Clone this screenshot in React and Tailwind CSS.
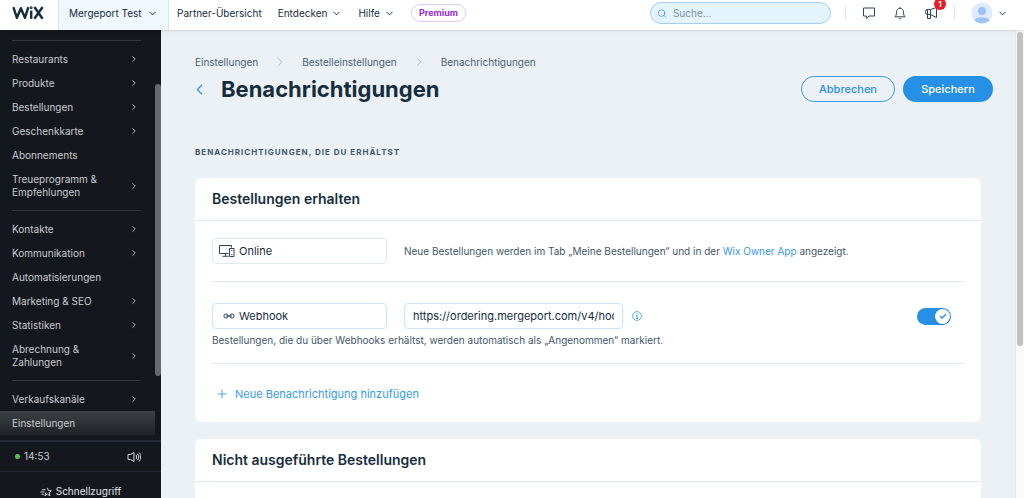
import React, { useState } from "react";
import { ChevronDown, ChevronLeft, ChevronRight, Plus, Search } from "lucide-react";

const menuGroups = [
  [
    { title: "Restaurants", sub: true },
    { title: "Produkte", sub: true },
    { title: "Bestellungen", sub: true },
    { title: "Geschenkkarte", sub: true },
    { title: "Abonnements" },
    { title: "Treueprogramm & Empfehlungen", sub: true, tall: true },
  ],
  [
    { title: "Kontakte", sub: true },
    { title: "Kommunikation", sub: true },
    { title: "Automatisierungen" },
    { title: "Marketing & SEO", sub: true },
    { title: "Statistiken", sub: true },
    { title: "Abrechnung & Zahlungen", sub: true, tall: true },
  ],
  [
    { title: "Verkaufskanäle", sub: true },
    { title: "Einstellungen", active: true },
  ],
];

const WixLogo = () => (
  <svg viewBox="0 0 32 14" className="h-3.5 w-8" fill="none" stroke="#162d3d" strokeWidth="2.4">
    <path d="M1.4 1.2 4.9 11.8 8.9 2.2 12.9 11.8 16.4 1.2" strokeLinejoin="round" />
    <path d="M19.2 4.6V12.8" />
    <circle cx="19.2" cy="1.7" r="0.5" strokeWidth="1.8" />
    <path d="M22.4 1 30.6 12.8M30.6 1 22.4 12.8" />
  </svg>
);

const ChatIcon = () => (
  <svg viewBox="0 0 14 14" className="size-3.5" fill="none" stroke="#2f4554" strokeLinejoin="round">
    <path d="M1.5 2h11v8H7l-2.6 2.4V10H1.5z" />
  </svg>
);

const BellIcon = () => (
  <svg viewBox="0 0 14 14" className="size-3.5" fill="none" stroke="#2f4554" strokeLinejoin="round">
    <path d="M7 1v1.2M2 10.8c1-1 1.5-2 1.5-4.6C3.5 3.8 5 2.3 7 2.3s3.5 1.5 3.5 3.9c0 2.6.5 3.6 1.500 4.600zM5.800 12.200c.5.9 1.900.9 2.400 0" />
  </svg>
);

const MegaphoneIcon = () => (
  <svg viewBox="0 0 14 14" className="size-3.5" fill="none" stroke="#2f4554" strokeLinejoin="round">
    <path d="M6.500 3.500H3.500a2 2 0 0 0-2 2v1a2 2 0 0 0 2 2h3zM6.500 3.500l6-2v10l-6-3M3.500 8.500v4h3v-4M3.500 3.500v5" />
  </svg>
);

const SpeakerIcon = () => (
  <svg viewBox="0 0 14 12" className="h-3 w-3.5" fill="none" stroke="#d5d8dc" strokeLinejoin="round">
    <path d="M1 3.500h2.500L7 1.500v9L3.500 8.500H1zM9 4c.8 1 .8 3 0 4M10.500 2.700c1.500 1.800 1.500 4.800 0 6.600M12 1.500c2 2.400 2 6.600 0 9" />
  </svg>
);

const StarIcon = () => (
  <svg viewBox="0 0 13 12" className="h-3 w-3" fill="none" stroke="#e3e5e8" strokeLinejoin="round">
    <path d="M8 1.500 9.200 4.500l3 .2-2.300 2 .8 3.300L8 8.300 5.300 10l.8-3.300M2 3.500h4M.5 6h4.500M1.500 8.500h2.500" />
  </svg>
);

const DevicesIcon = () => (
  <svg viewBox="0 0 16 12" className="h-3 w-4" fill="none" stroke="#2f4554">
    <path d="M9.500 8.500H.5v-8h12v2M6.500 8.500v2.500M3.500 11.300h6M10.500 3.500h4.500v8h-4.500zM12.200 5.500h1.200M12.200 9.700h1.200" />
  </svg>
);

const WebhookIcon = () => (
  <svg viewBox="0 0 12 6" className="h-1.5 w-3" fill="none" stroke="#2f4554">
    <circle cx="3" cy="3" r="2.100" />
    <circle cx="9" cy="3" r="2.100" />
    <path d="M3 3h6" />
  </svg>
);

const InfoIcon = () => (
  <svg viewBox="0 0 10 10" className="size-2.5" fill="none" stroke="#3899ec">
    <circle cx="5" cy="5" r="4.400" strokeWidth="0.800" />
    <path d="M5 2.200v1M4.200 4.400H5v3M4 7.500h2" />
  </svg>
);

const TopBar = () => (
  <header className="relative z-10 flex h-[30px] shrink-0 items-center bg-white pb-1 text-[10px] text-[#162d3d] shadow-sm">
    <a href="#home" aria-label="Wix" className="flex w-[58px] shrink-0 justify-center pr-0.5">
      <WixLogo />
    </a>
    <button
      type="button"
      className="-mb-1 flex h-[30px] w-[111px] shrink-0 items-center justify-between border-x border-[#d9e6f0] bg-[#f0f7ff] px-2.5 pb-1 whitespace-nowrap"
    >
      Mergeport Test
      <ChevronDown size={11} />
    </button>
    <nav className="flex shrink-0 items-center pl-2 whitespace-nowrap">
      <a href="#partner">Partner-Übersicht</a>
      <button type="button" className="ml-4 flex items-center gap-1">
        Entdecken <ChevronDown size={11} />
      </button>
      <button type="button" className="ml-4 flex items-center gap-1">
        Hilfe <ChevronDown size={11} />
      </button>
      <button
        type="button"
        className="ml-4 h-[18px] w-[55px] rounded-full border border-[#e8c8f8] text-[9px] font-bold text-[#9a27d5]"
      >
        Premium
      </button>
    </nav>
    {/* search + account */}
    <div className="ml-auto flex items-center pr-4">
      <label className="flex h-[22px] w-[181px] items-center gap-1.5 rounded-full border border-[#a8cdf5] bg-[#e4f4ff] px-1.5">
        <Search size={11} color="#4a98ea" />
        <input
          type="search"
          aria-label="Suche"
          placeholder="Suche..."
          className="w-full bg-transparent outline-none placeholder:text-[#7a8fa0]"
        />
      </label>
      <div className="ml-3.5 flex items-center gap-[17px] border-x border-[#dfe5eb] px-4">
        <button type="button" aria-label="Nachrichten">
          <ChatIcon />
        </button>
        <button type="button" aria-label="Mitteilungen">
          <BellIcon />
        </button>
        <button type="button" aria-label="Neuigkeiten" className="relative">
          <MegaphoneIcon />
          <span className="absolute -top-2 -right-2 flex size-3 items-center justify-center rounded-full bg-[#ec1c24] text-[8px] font-bold text-white">
            1
          </span>
        </button>
      </div>
      <button type="button" aria-label="Konto" className="ml-4 flex items-center gap-1">
        <svg viewBox="0 0 22 22" className="size-[22px]">
          <circle cx="11" cy="11" r="10.500" fill="#dfebff" />
          <circle cx="11" cy="9" r="4" fill="#9cc2fb" />
          <path d="M3.500 18.200a7.800 4 0 0 1 15 0 10.500 10.500 0 0 1-15 0z" fill="#9cc2fb" />
        </svg>
        <ChevronDown size={11} />
      </button>
    </div>
  </header>
);

const Sidebar = () => (
  <aside className="relative flex w-[161px] shrink-0 flex-col bg-[#14171e] text-[10px] text-[#c9cbcf]">
    <nav className="min-h-0 flex-1 overflow-hidden pt-2.5">
      {menuGroups.map((group, i) => (
        <ul key={i} className="relative pt-[7px] pb-[5px]">
          <li aria-hidden="true" className="absolute top-0 right-5 left-3 h-px bg-[#34373c]" />
          {group.map(({ title, sub, tall, active }) => (
            <li key={title}>
              <a
                href="#menu"
                className={`mr-1.5 flex items-center justify-between pr-4 pl-3 leading-[13px] ${
                  tall ? "h-[38px]" : "h-6"
                } ${active ? "bg-linear-to-b from-[#3d4045] to-[#1f2227]" : ""}`}
              >
                <span className={tall ? "w-24" : ""}>{title}</span>
                {sub && <ChevronRight size={10} />}
              </a>
            </li>
          ))}
        </ul>
      ))}
    </nav>
    {/* scroll thumb */}
    <div className="absolute top-[54px] right-0 h-[292px] w-1.5 rounded-full bg-[#68696e]" />
    <div className="flex h-[31px] items-center border-t-2 border-[#24273a] pr-5 pl-[15px]">
      <span className="size-[5px] rounded-full bg-[#60bc57]" />
      <span className="ml-1">14:53</span>
      <button type="button" aria-label="Ton" className="ml-auto">
        <SpeakerIcon />
      </button>
    </div>
    <button
      type="button"
      className="flex h-[27px] items-end justify-center gap-1 border-t border-[#24273a] leading-[14px] text-[#e3e5e8]"
    >
      <StarIcon />
      Schnellzugriff
    </button>
  </aside>
);

const Card = ({ title, children }) => (
  <section className="mb-[17px] rounded-md bg-white">
    <h2 className="flex h-[43px] items-center border-b border-[#e2e9ee] px-[17px] text-sm font-semibold">
      {title}
    </h2>
    <div className="px-[17px]">{children}</div>
  </section>
);

const App = () => {
  const [enabled, setEnabled] = useState(true);
  const [url, setUrl] = useState("https://ordering.mergeport.com/v4/hooks/wix/orders");

  return (
    <div className="flex h-screen flex-col overflow-hidden font-['Inter',sans-serif] text-[#162d3d]">
      <TopBar />
      <div className="flex min-h-0 flex-1">
        <Sidebar />
        <main className="min-w-0 flex-1 overflow-hidden bg-[#ecf1f6] pt-[25px] pr-[34px] pl-[34px]">
          {/* breadcrumbs */}
          <nav className="flex items-center gap-[15px] text-[10px] leading-[14px] text-[#4a6072]">
            <a href="#settings">Einstellungen</a>
            <ChevronRight size={14} color="#a3b1bd" strokeWidth={1.5} />
            <a href="#orders">Bestelleinstellungen</a>
            <ChevronRight size={14} color="#a3b1bd" strokeWidth={1.5} />
            <span>Benachrichtigungen</span>
          </nav>
          {/* title + buttons */}
          <div className="-mr-3 mt-[7px] flex items-center">
            <button type="button" aria-label="Zurück" className="-ml-1 w-[30px]">
              <ChevronLeft size={17} color="#3899ec" />
            </button>
            <h1 className="text-[22px] leading-[26px] font-bold">Benachrichtigungen</h1>
            <button
              type="button"
              className="ml-auto h-[26px] w-[94px] rounded-full border border-[#3899ec] text-[11px] font-medium text-[#2b90e6]"
            >
              Abbrechen
            </button>
            <button
              type="button"
              className="ml-2 h-[26px] w-[90px] rounded-full bg-[#2590e6] text-[11px] font-medium text-white"
            >
              Speichern
            </button>
          </div>

          <p className="mt-[43px] mb-[19px] text-[8px] leading-[14px] font-bold tracking-[1px] text-[#3f586a] uppercase">
            Benachrichtigungen, die du erhältst
          </p>

          <Card title="Bestellungen erhalten">
            <div className="flex items-center gap-[17px] border-b border-[#e2e9ee] py-[17px]">
              <div className="flex h-[26px] w-[175px] items-center gap-1 rounded border border-[#dfe9ef] px-1.5 text-[11px]">
                <DevicesIcon />
                Online
              </div>
              <p className="text-[10px] text-[#3f586a]">
                Neue Bestellungen werden im Tab „Meine Bestellungen“ und in der{" "}
                <a href="#owner-app" className="text-[#3899ec]">
                  Wix Owner App
                </a>{" "}
                angezeigt.
              </p>
            </div>

            <div className="border-b border-[#e2e9ee] pt-[21px] pb-4">
              <div className="flex items-center gap-[17px]">
                <div className="flex h-[26px] w-[175px] items-center gap-1 rounded border border-[#c7e5fb] pl-2.5 text-[11px]">
                  <WebhookIcon />
                  Webhook
                </div>
                <input
                  type="text"
                  aria-label="Webhook-URL"
                  value={url}
                  onChange={(e) => setUrl(e.target.value)}
                  className="h-[26px] w-[219px] rounded border border-[#c7e5fb] px-2 text-[11px] outline-none"
                />
                <button type="button" aria-label="Info" className="-ml-2">
                  <InfoIcon />
                </button>
                <label className="relative mr-[13px] ml-auto flex h-[17px] w-[34px] cursor-pointer items-center">
                  <input
                    type="checkbox"
                    role="switch"
                    aria-label="Webhook aktiv"
                    checked={enabled}
                    onChange={() => setEnabled(!enabled)}
                    className="peer h-full w-full appearance-none rounded-full bg-[#b6c1cd] checked:bg-[#2590e6]"
                  />
                  <span className="pointer-events-none absolute left-px flex size-[15px] items-center justify-center rounded-full bg-white shadow peer-checked:right-px peer-checked:left-auto">
                    <svg viewBox="0 0 8 6" className="h-1.5 w-2" fill="none" stroke="#2590e6" strokeWidth="1.300">
                      <path d="M1 3 3.200 5 7 1" />
                    </svg>
                  </span>
                </label>
              </div>
              <p className="mt-1 text-[10px] leading-[14px] text-[#3f586a]">
                Bestellungen, die du über Webhooks erhältst, werden automatisch als „Angenommen“ markiert.
              </p>
            </div>

            <div className="pt-[22px] pb-5">
              <button
                type="button"
                className="flex items-center gap-1.5 pl-[3px] text-[11px] leading-4 text-[#3899ec]"
              >
                <Plus size={14} strokeWidth={1.5} />
                Neue Benachrichtigung hinzufügen
              </button>
            </div>
          </Card>

          <Card title="Nicht ausgeführte Bestellungen">
            <div className="h-20" />
          </Card>
        </main>
        {/* page scrollbar */}
        <div className="w-[9px] shrink-0 border-l border-[#e6e8ea] bg-[#fafafa] py-0.5 pl-px">
          <div className="h-[314px] w-[6px] rounded-full bg-[#c1c1c1]" />
        </div>
      </div>
    </div>
  );
};

export default App;
